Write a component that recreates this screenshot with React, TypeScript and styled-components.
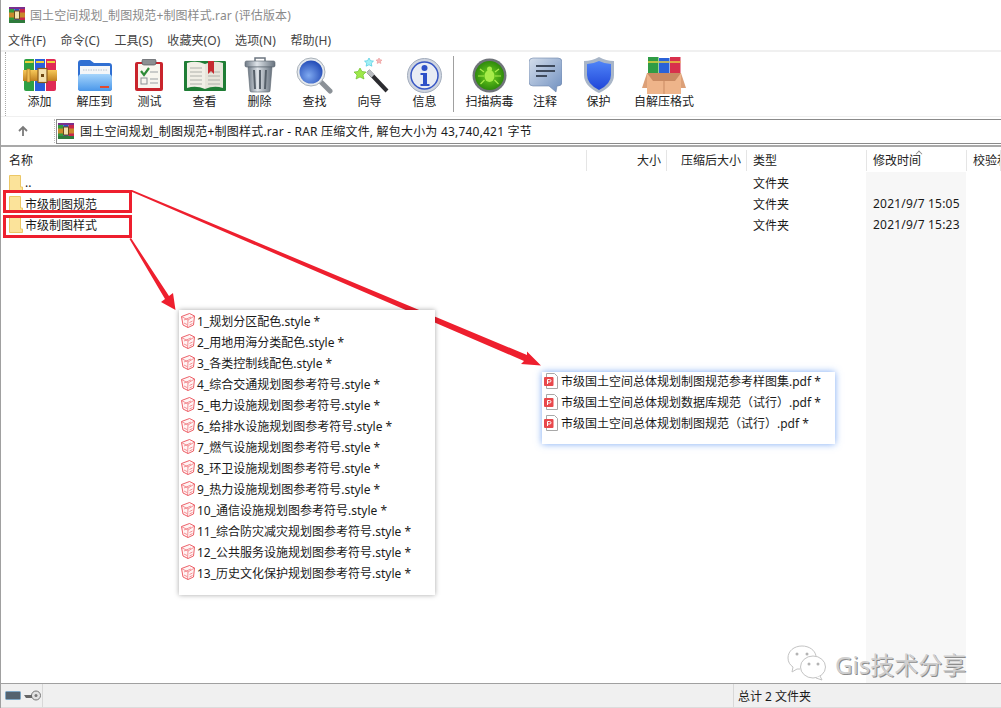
import * as React from "react"
import styled, {createGlobalStyle} from "styled-components"

const FONT = `"Noto Sans", "Noto Sans CJK SC", sans-serif`

const GlobalStyle = createGlobalStyle`
  html, body {
    margin: 0;
    padding: 0;
    height: 100%;
    background: #fff;
    overflow: hidden;
  }
  #root {
    height: 100%;
  }
`

const Logo = ({size}: {size: number}) => (
    <svg width={size} height={size} viewBox="0 0 16 16">
        <rect x="0" y="0" width="5.3" height="16" fill="#2f9a3c" />
        <rect x="5.3" y="0" width="5.3" height="16" fill="#2a55c8" />
        <rect x="10.6" y="0" width="5.4" height="16" fill="#c9264a" />
        <rect x="0" y="0" width="16" height="2" fill="#7a2f8e" />
        <rect x="0" y="13" width="16" height="3" fill="#2f7a3c" />
        <rect x="0" y="5.5" width="16" height="5" fill="#c98a2c" />
        <rect x="5.5" y="4" width="5" height="8" fill="#f2e2b0" stroke="#6b4a1a" strokeWidth="1" />
    </svg>
)

const AddIcon = () => (
    <svg width="34" height="34" viewBox="0 0 34 34">
        <defs>
            <linearGradient id="belt" x1="0" x2="0" y1="0" y2="1">
                <stop offset="0" stopColor="#f7c95a" />
                <stop offset="1" stopColor="#c0801f" />
            </linearGradient>
        </defs>
        <path d="M1 3q0-2 2-2h8v32H3q-2 0-2-2z" fill="#2ea043" />
        <rect x="12" y="1" width="10" height="32" fill="#2a5fdc" />
        <path d="M23 1h8q2 0 2 2v28q0 2-2 2h-8z" fill="#e02a55" />
        <path d="M2 4h8.500M13 4h8M24 4h8" stroke="#ecd23a" strokeWidth="2" />
        <rect x="0" y="12" width="34" height="11" fill="url(#belt)" />
        <rect x="4" y="11" width="3" height="13" fill="#f0bf55" stroke="#a66e1c" strokeWidth=".6" />
        <rect x="15" y="10.500" width="9" height="14" fill="#f4e2b0" stroke="#8a5a18" strokeWidth="1.200" />
        <rect x="18" y="16" width="3" height="3" fill="#6d4612" />
    </svg>
)

const ExtractIcon = () => (
    <svg width="36" height="34" viewBox="0 0 36 34">
        <defs>
            <linearGradient id="fold" x1="0" x2="0" y1="0" y2="1">
                <stop offset="0" stopColor="#a5d4fb" />
                <stop offset="1" stopColor="#4a97ea" />
            </linearGradient>
        </defs>
        <path d="M1 5q0-3 3-3h9l4 3h15q3 0 3 3v22q0 3-3 3H4q-3 0-3-3z" fill="#2f6fd2" />
        <rect x="3" y="8" width="30" height="10" fill="#f4f6f8" />
        <path d="M6 12h24" stroke="#b8c4d0" strokeDasharray="1.500 1" />
        <path d="M1 20q0-4 4-4h26q4 0 4 4v10q0 3-3 3H4q-3 0-3-3z" fill="url(#fold)" />
        <rect x="23" y="28" width="9" height="2" fill="#e2492f" />
    </svg>
)

const TestIcon = () => (
    <svg width="30" height="33" viewBox="0 0 30 33">
        <rect x="0" y="3" width="28" height="29" rx="2" fill="#c9242c" />
        <rect x="3" y="5" width="22" height="24" fill="#f8f6ef" />
        <rect x="7" y="0" width="14" height="6" rx="2" fill="#8c8f92" stroke="#55585c" strokeWidth=".7" />
        <path d="M6 12l3 4 5-7" fill="none" stroke="#2e8b37" strokeWidth="2.200" />
        <path d="M15 13h8M15 20h8M15 24h8" stroke="#9aa0a4" strokeWidth="1" />
        <rect x="6" y="19" width="6" height="6" fill="none" stroke="#8a8f93" />
    </svg>
)

const ViewIcon = () => (
    <svg width="42" height="33" viewBox="0 0 42 33">
        <rect x="0" y="2" width="42" height="30" rx="1" fill="#1f7d35" />
        <path d="M3 4q9-3 18 1v25q-9-4-18-1z" fill="#f1efe6" />
        <path d="M39 4q-9-3-18 1v25q9-4 18-1z" fill="#e7e5da" />
        <path d="M6 9h12M6 13h12M6 17h12M6 21h12M6 25h12M24 13h12M24 17h12M24 21h12M24 25h12" stroke="#aeb0aa" strokeWidth="1" />
        <path d="M24 2h6v13l-3-3-3 3z" fill="#c52a30" />
    </svg>
)

const DeleteIcon = () => (
    <svg width="32" height="36" viewBox="0 0 32 36">
        <defs>
            <linearGradient id="can" x1="0" x2="1" y1="0" y2="0">
                <stop offset="0" stopColor="#6f7a86" />
                <stop offset=".4" stopColor="#dfe4e9" />
                <stop offset="1" stopColor="#67727e" />
            </linearGradient>
        </defs>
        <path d="M11 4V1h10v3" fill="none" stroke="#6c7680" strokeWidth="1.500" />
        <rect x="1" y="4" width="30" height="6" rx="1.500" fill="url(#can)" stroke="#59636d" strokeWidth=".6" />
        <path d="M4 10h24l-2 24q0 1-2 1H8q-2 0-2-1z" fill="url(#can)" stroke="#59636d" strokeWidth=".6" />
        <path d="M10 13l1 19M16 13v19M22 13l-1 19" stroke="#56606a" strokeWidth="2" />
    </svg>
)

const FindIcon = () => (
    <svg width="37" height="37" viewBox="0 0 37 37">
        <defs>
            <radialGradient id="lens" cx=".4" cy=".65" r=".7">
                <stop offset="0" stopColor="#7fa9f0" />
                <stop offset="1" stopColor="#1f47b4" />
            </radialGradient>
        </defs>
        <path d="M24 24l10 10" stroke="#8b9197" strokeWidth="5" strokeLinecap="round" />
        <circle cx="15" cy="15" r="14" fill="#e6eaee" stroke="#aab2ba" />
        <circle cx="15" cy="15" r="11.500" fill="url(#lens)" />
    </svg>
)

const WizardIcon = () => (
    <svg width="38" height="36" viewBox="0 0 38 36">
        <path d="M17 14l19 20" stroke="#2c2c30" strokeWidth="4" />
        <path d="M17 14l5 5" stroke="#b9bcc0" strokeWidth="4" />
        <path d="M9 11l2 3.500 4 .5-3 3 1 4-4-2-4 2 1-4-3-3 4-.5z" fill="#9ee84a" stroke="#5fb81e" strokeWidth=".6" />
        <path d="M18 1l1.500 2.700 3 .4-2.200 2.100.6 3-2.900-1.400-2.900 1.400.6-3-2.200-2.100 3-.4z" fill="#a3f0f5" stroke="#37c5dd" strokeWidth=".6" />
        <path d="M28 1l1 1.800 2 .3-1.500 1.400.4 2-1.900-1-1.900 1 .4-2-1.500-1.400 2-.3z" fill="#f7b8b8" stroke="#e78a8a" strokeWidth=".5" />
    </svg>
)

const InfoIcon = () => (
    <svg width="35" height="35" viewBox="0 0 35 35">
        <circle cx="17.500" cy="17.500" r="17" fill="#cfd5e0" stroke="#a2acbc" />
        <circle cx="17.500" cy="17.500" r="13.500" fill="#e8ecf4" stroke="#3555c4" strokeWidth="1.500" />
        <circle cx="17.500" cy="10" r="3" fill="#2d50c8" />
        <path d="M13.500 15h6.500v11h2.500v2h-9v-2h2.500v-9h-2.500z" fill="#2d50c8" />
    </svg>
)

const ScanIcon = () => (
    <svg width="35" height="35" viewBox="0 0 35 35">
        <defs>
            <radialGradient id="radar">
                <stop offset="0" stopColor="#6fd41f" />
                <stop offset="1" stopColor="#2f8a0c" />
            </radialGradient>
        </defs>
        <circle cx="17.500" cy="17.500" r="17" fill="#70747a" />
        <circle cx="17.500" cy="17.500" r="14.500" fill="url(#radar)" />
        <ellipse cx="17.500" cy="18" rx="5" ry="6" fill="#a8ec4a" />
        <circle cx="17.500" cy="11" r="2.500" fill="#a8ec4a" />
        <path d="M12 14l-4-3M12 18H6M12.500 22l-4 4M23 14l4-3M23 18h6M22.500 22l4 4" stroke="#a8ec4a" strokeWidth="1.200" />
    </svg>
)

const CommentIcon = () => (
    <svg width="33" height="36" viewBox="0 0 33 36">
        <defs>
            <linearGradient id="bub" x1="0" x2="1" y1="0" y2="1">
                <stop offset="0" stopColor="#d4deeb" />
                <stop offset="1" stopColor="#6f8fc0" />
            </linearGradient>
        </defs>
        <path d="M4 1h25q4 0 4 4v20q0 4-4 4h-1l-1 6-7-6H4q-4 0-4-4V5q0-4 4-4z" fill="url(#bub)" stroke="#6d85aa" strokeWidth=".6" />
        <path d="M7 9h19M7 14h19M7 19h11" stroke="#3e4a5c" strokeWidth="2" />
    </svg>
)

const ShieldIcon = () => (
    <svg width="30" height="36" viewBox="0 0 30 36">
        <defs>
            <linearGradient id="sh" x1="0" x2="0" y1="0" y2="1">
                <stop offset="0" stopColor="#4f84f8" />
                <stop offset="1" stopColor="#1f45d8" />
            </linearGradient>
        </defs>
        <path d="M15 0q7 4 15 4v14q0 11-15 18Q0 29 0 18V4q8 0 15-4z" fill="#a9b6c8" />
        <path d="M15 4q6 3 12 3v11q0 9-12 15Q3 27 3 18V7q6 0 12-3z" fill="url(#sh)" />
    </svg>
)

const SfxIcon = () => (
    <svg width="44" height="37" viewBox="0 0 44 37">
        <rect x="6" y="0" width="10.500" height="16" fill="#2f9c45" />
        <rect x="17" y="1" width="10.500" height="15" fill="#2a62d8" />
        <rect x="28" y="0" width="10.500" height="16" fill="#d8304c" />
        <path d="M6 5h10.500M17 5h10.500M28 5h10.500" stroke="#e8cf3c" strokeWidth="1.500" />
        <rect x="5" y="16" width="34" height="21" fill="#eeb48a" />
        <path d="M5 16L0 31h5zM39 16l5 15h-5z" fill="#dca078" />
        <path d="M5 16h34l-6 8H11z" fill="#c98a62" />
        <path d="M22 22v15" stroke="#c98a62" />
    </svg>
)

const FolderIcon = () => (
    <svg width="14" height="16" viewBox="0 0 14 16">
        <path d="M.5.500h11V12h2v3.500H.5z" fill="#fbe39a" stroke="#ecc766" />
    </svg>
)

const StyleIcon = () => (
    <svg width="14" height="16" viewBox="0 0 14 16">
        <path d="M.5 3.500L8.500.5l5 2.500-1 9-5.500 2.500-5-2.500z" fill="#fff4f4" stroke="#ea4f58" strokeWidth=".9" />
        <path d="M.5 3.500L7 7l6.500-4M7 7l-.5 8M3 7l7-3M3 10l3 1.500M8.500 9.500l3-1.500M8.500 12l3-1.500" fill="none" stroke="#f0767c" strokeWidth=".8" />
    </svg>
)

const PdfIcon = () => (
    <svg width="14" height="16" viewBox="0 0 14 16">
        <path d="M2.500.500h8l3 3v12h-11z" fill="#fff" stroke="#a8a8a8" />
        <rect x="0" y="4" width="9.500" height="9" rx="1" fill="#e8484c" />
        <path d="M3.500 11V6.500h2q1.500 0 1.500 1.300T5.500 9H3.500" fill="none" stroke="#fff" strokeWidth="1" />
    </svg>
)

const toolButtons = [
    {label: "添加", icon: <AddIcon />},
    {label: "解压到", icon: <ExtractIcon />},
    {label: "测试", icon: <TestIcon />},
    {label: "查看", icon: <ViewIcon />},
    {label: "删除", icon: <DeleteIcon />},
    {label: "查找", icon: <FindIcon />},
    {label: "向导", icon: <WizardIcon />},
    {label: "信息", icon: <InfoIcon />},
]

const extraButtons = [
    {label: "扫描病毒", icon: <ScanIcon />, width: 57},
    {label: "注释", icon: <CommentIcon />, width: 54},
    {label: "保护", icon: <ShieldIcon />, width: 53},
    {label: "自解压格式", icon: <SfxIcon />, width: 78},
]

const menus = ["文件(F)", "命令(C)", "工具(S)", "收藏夹(O)", "选项(N)", "帮助(H)"]

const folders = [
    {name: "..", date: ""},
    {name: "市级制图规范", date: "2021/9/7 15:05"},
    {name: "市级制图样式", date: "2021/9/7 15:23"},
]

const styleFiles = [
    "1_规划分区配色.style *",
    "2_用地用海分类配色.style *",
    "3_各类控制线配色.style *",
    "4_综合交通规划图参考符号.style *",
    "5_电力设施规划图参考符号.style *",
    "6_给排水设施规划图参考符号.style *",
    "7_燃气设施规划图参考符号.style *",
    "8_环卫设施规划图参考符号.style *",
    "9_热力设施规划图参考符号.style *",
    "10_通信设施规划图参考符号.style *",
    "11_综合防灾减灾规划图参考符号.style *",
    "12_公共服务设施规划图参考符号.style *",
    "13_历史文化保护规划图参考符号.style *",
]

const pdfFiles = [
    "市级国土空间总体规划制图规范参考样图集.pdf *",
    "市级国土空间总体规划数据库规范（试行）.pdf *",
    "市级国土空间总体规划制图规范（试行）.pdf *",
]

export default function App() {
    return (
        <Window>
            <GlobalStyle />
            <TitleBar>
                <Logo size={16} />
                <TitleText>国土空间规划_制图规范+制图样式.rar (评估版本)</TitleText>
            </TitleBar>
            <MenuBar>
                {menus.map((menu) => <MenuItem key={menu}>{menu}</MenuItem>)}
            </MenuBar>
            <Toolbar>
                <Grip />
                {toolButtons.map((b) => (
                    <ToolButton key={b.label} $width={55}>
                        <ToolIcon>{b.icon}</ToolIcon>
                        {b.label}
                    </ToolButton>
                ))}
                <ToolSeparator />
                {extraButtons.map((b) => (
                    <ToolButton key={b.label} $width={b.width}>
                        <ToolIcon>{b.icon}</ToolIcon>
                        {b.label}
                    </ToolButton>
                ))}
            </Toolbar>
            <AddressBar>
                <UpButton>
                    <svg width="12" height="12" viewBox="0 0 12 12">
                        <path d="M6 11V2M2 6l4-4 4 4" fill="none" stroke="#7a7a7a" strokeWidth="1.800" />
                    </svg>
                </UpButton>
                <AddressField>
                    <Logo size={16} />
                    国土空间规划_制图规范+制图样式.rar - RAR 压缩文件, 解包大小为 43,740,421 字节
                </AddressField>
            </AddressBar>
            <ListHeader>
                <HeaderCell>名称</HeaderCell>
                <HeaderCell $right>大小</HeaderCell>
                <HeaderCell $right>压缩后大小</HeaderCell>
                <HeaderCell>类型</HeaderCell>
                <HeaderCell>
                    修改时间
                    <SortCaret />
                </HeaderCell>
                <HeaderCell>校验和</HeaderCell>
            </ListHeader>
            <ListBody>
                {folders.map((f) => (
                    <FileRow key={f.name}>
                        <NameCell>
                            <FolderIcon />
                            {f.name}
                        </NameCell>
                        <span />
                        <span />
                        <RowCell>文件夹</RowCell>
                        <DateCell>{f.date}</DateCell>
                    </FileRow>
                ))}
            </ListBody>
            <StatusBar>
                <StatusIcons>
                    <svg width="16" height="9" viewBox="0 0 16 9">
                        <rect x=".5" y=".5" width="15" height="8" rx="1" fill="#55636f" stroke="#7fa6c4" />
                    </svg>
                    <svg width="17" height="11" viewBox="0 0 17 11">
                        <circle cx="12" cy="5.500" r="4.500" fill="#e2e2e2" stroke="#777" />
                        <circle cx="12" cy="5.500" r="1.500" fill="#777" />
                        <path d="M0 5h8v3H2z" fill="#666" />
                    </svg>
                </StatusIcons>
                <StatusFill />
                <StatusText>总计 2 文件夹</StatusText>
            </StatusBar>

            <RedBox $top={190} />
            <RedBox $top={215} />
            <Arrows width="1001" height="708" viewBox="0 0 1001 708">
                <path d="M132 190L527 355l0-3.500 14 14-20-1.500 3-3L131 191.500z" fill="#ee1f2e" />
                <path d="M131 238l38 58 4-3 2.500 17L161 302l4-3-35.500-60z" fill="#ee1f2e" />
            </Arrows>

            <StylePopup>
                {styleFiles.map((name) => (
                    <PopupRow key={name} $gap={2}>
                        <StyleIcon />
                        {name}
                    </PopupRow>
                ))}
            </StylePopup>
            <PdfPopup>
                {pdfFiles.map((name) => (
                    <PopupRow key={name} $gap={3}>
                        <PdfIcon />
                        {name}
                    </PopupRow>
                ))}
            </PdfPopup>

            <Watermark>
                <svg width="40" height="36" viewBox="0 0 40 36">
                    <path d="M15 1C7 1 1 6 1 13c0 4 2 7 5 9l-1 5 5-3h3" fill="#fff" stroke="#c4c4c4" strokeWidth="1" />
                    <path d="M15 1c7 0 13 4 14 10" fill="none" stroke="#c4c4c4" strokeWidth="1" />
                    <ellipse cx="26" cy="22" rx="12.500" ry="11" fill="#fff" stroke="#c4c4c4" strokeWidth="1" />
                    <path d="M33 31l2 4-6-2" fill="#fff" stroke="#c4c4c4" strokeWidth="1" />
                    <circle cx="10" cy="9" r="1.500" fill="#b4b4b4" />
                    <circle cx="20" cy="9" r="1.500" fill="#b4b4b4" />
                    <circle cx="22" cy="19" r="1.500" fill="#b4b4b4" />
                    <circle cx="31" cy="19" r="1.500" fill="#b4b4b4" />
                </svg>
                <WatermarkText>Gis技术分享</WatermarkText>
            </Watermark>
        </Window>
    )
}

const Window = styled("div")`
    position: relative;
    height: 708px;
    width: 1001px;
    overflow: hidden;
    display: flex;
    flex-direction: column;
    box-sizing: border-box;
    border-left: 1px solid #a0a0a0;
    background: #fff;
    color: #1a1a1a;
    font-family: ${FONT};
    font-size: 12px;
`

const TitleBar = styled("div")`
    height: 30px;
    flex: none;
    display: flex;
    align-items: center;
    gap: 5px;
    padding-left: 8px;
`

const TitleText = styled("span")`
    color: #8a8a8a;
    white-space: nowrap;
    letter-spacing: .1px;
`

const MenuBar = styled("div")`
    height: 20px;
    flex: none;
    display: flex;
    align-items: center;
    gap: 14.6px;
    padding-left: 7px;
    color: #444;
    letter-spacing: .1px;
`

const MenuItem = styled("span")`
    white-space: nowrap;
`

const Toolbar = styled("div")`
    height: 67px;
    flex: none;
    box-sizing: border-box;
    display: flex;
    align-items: stretch;
    padding-left: 4px;
    border-top: 2px solid #f0f0f0;
    border-bottom: 1px solid #f0f0f0;
`

const Grip = styled("div")`
    width: 6px;
    flex: none;
    border-left: 1px dotted #aaa;
`

const ToolButton = styled("div")<{$width: number}>`
    width: ${(p) => p.$width}px;
    flex: none;
    display: flex;
    flex-direction: column;
    align-items: center;
    padding-top: 4px;
    white-space: nowrap;
    color: #222;
`

const ToolIcon = styled("div")`
    height: 38px;
    display: flex;
    align-items: center;
    justify-content: center;
    margin-bottom: -2px;
`

const ToolSeparator = styled("div")`
    width: 1px;
    flex: none;
    margin: 4px 7px 4px 1px;
    background: #a0a0a0;
`

const AddressBar = styled("div")`
    height: 30px;
    flex: none;
    display: flex;
    align-items: center;
    border-bottom: 2px solid #a9a9a9;
    box-sizing: border-box;
`

const UpButton = styled("div")`
    width: 54px;
    flex: none;
    box-sizing: border-box;
    padding-left: 16px;
    display: flex;
    align-items: center;
    border-right: 1px dotted #bbb;
    margin-right: 1px;
    height: 24px;
`

const AddressField = styled("div")`
    flex: 1;
    height: 25px;
    box-sizing: border-box;
    display: flex;
    align-items: center;
    gap: 6px;
    padding-left: 1px;
    border: 1px solid #8a8a8a;
    border-right: none;
    white-space: pre;
    letter-spacing: .2px;
`

const columns = "586px 80px 80px 120px 100px 1fr"

const ListHeader = styled("div")`
    height: 25px;
    flex: none;
    box-sizing: border-box;
    padding-top: 3px;
    padding-bottom: 1px;
    display: grid;
    grid-template-columns: ${columns};
`

const HeaderCell = styled("div")<{$right?: boolean}>`
    position: relative;
    box-sizing: border-box;
    padding: 0 5px 0 6px;
    line-height: 21px;
    text-align: ${(p) => (p.$right ? "right" : "left")};
    white-space: nowrap;
    overflow: hidden;
    color: #222;
    border-right: 1px solid #e5e5e5;

    &:first-child {
        padding-left: 8px;
    }
`

const SortCaret = styled("span")`
    position: absolute;
    left: 49px;
    top: 1px;
    width: 5px;
    height: 5px;
    border-left: 1px solid #888;
    border-top: 1px solid #888;
    transform: rotate(45deg) scale(.8);
`

const ListBody = styled("div")`
    flex: 1;
    background: linear-gradient(to right, #fff 865px, #f7f7f7 865px, #f7f7f7 965px, #fff 965px);
`

const FileRow = styled("div")`
    height: 21px;
    display: grid;
    grid-template-columns: ${columns};
    align-items: center;
`

const NameCell = styled("div")`
    display: flex;
    align-items: center;
    gap: 2px;
    padding-left: 8px;
`

const RowCell = styled("div")`
    padding-left: 6px;
    white-space: nowrap;
`

const DateCell = styled(RowCell)`
    letter-spacing: .2px;
`

const StatusBar = styled("div")`
    height: 25px;
    flex: none;
    box-sizing: border-box;
    display: flex;
    align-items: center;
    background: #f0f0f0;
    border-top: 1px solid #a0a0a0;
    border-bottom: 1px solid #dcdcdc;
`

const StatusIcons = styled("div")`
    width: 42px;
    height: 100%;
    box-sizing: border-box;
    padding-left: 4px;
    display: flex;
    align-items: center;
    gap: 3px;
    border-right: 1px solid #d8d8d8;
`

const StatusFill = styled("div")`
    width: 690px;
    height: 100%;
    border-right: 1px solid #d8d8d8;
`

const StatusText = styled("span")`
    padding-left: 4px;
`

const RedBox = styled("div")<{$top: number}>`
    position: absolute;
    left: 2px;
    top: ${(p) => p.$top}px;
    width: 129px;
    height: 23px;
    box-sizing: border-box;
    border: 3px solid #ee1f2e;
`

const Arrows = styled("svg")`
    position: absolute;
    left: -1px;
    top: 0;
    pointer-events: none;
`

const Popup = styled("div")`
    position: absolute;
    box-sizing: border-box;
    background: #fff;
    display: flex;
    flex-direction: column;
`

const StylePopup = styled(Popup)`
    left: 178px;
    top: 310px;
    width: 256px;
    height: 285px;
    box-shadow: 0 0 5px rgba(0, 0, 0, .35);
`

const PdfPopup = styled(Popup)`
    left: 541px;
    top: 372px;
    width: 293px;
    height: 72px;
    box-shadow: 0 0 7px rgba(80, 140, 240, .75);

    & > :first-child {
        margin-top: -2px;
    }
`

const PopupRow = styled("div")<{$gap: number}>`
    height: 21px;
    flex: none;
    display: flex;
    align-items: center;
    gap: ${(p) => p.$gap}px;
    padding-left: 2px;
    white-space: pre;
`

const Watermark = styled("div")`
    position: absolute;
    left: 786px;
    top: 645px;
    display: flex;
    align-items: center;
    gap: 8px;
`

const WatermarkText = styled("span")`
    font-size: 24px;
    color: #cfcfcf;
    text-shadow: 1px 1px 0 #8c8c8c;
    white-space: nowrap;
`
